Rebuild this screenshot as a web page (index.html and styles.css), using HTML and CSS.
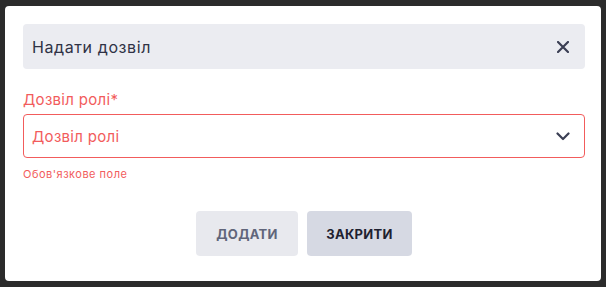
FILE: index.html
```html
<!DOCTYPE html>
<html lang="uk">
<head>
  <meta charset="UTF-8">
  <meta name="viewport" content="width=device-width, initial-scale=1.0">
  <title>Надати дозвіл</title>
  <link rel="stylesheet" href="styles.css">
</head>
<body>
  <div class="dialog">
    <div class="dialog-header">
      <span class="dialog-title">Надати дозвіл</span>
      <button class="close-btn" aria-label="Закрити">
        <svg width="12" height="12" viewBox="0 0 12 12">
          <path d="M1 1L11 11M11 1L1 11" stroke="#3b3f54" stroke-width="2.2" stroke-linecap="round"/>
        </svg>
      </button>
    </div>

    <label class="field-label" for="role">Дозвіл ролі*</label>
    <div class="select-box" id="role">
      <span class="placeholder">Дозвіл ролі</span>
      <svg class="chevron" width="14" height="9" viewBox="0 0 14 9">
        <path d="M1.5 1.5L7 7L12.5 1.5" fill="none" stroke="#3b3f54" stroke-width="2.2" stroke-linecap="round" stroke-linejoin="round"/>
      </svg>
    </div>
    <div class="field-error">Обов'язкове поле</div>

    <div class="actions">
      <button class="btn btn-add">Додати</button>
      <button class="btn btn-close">Закрити</button>
    </div>
  </div>
</body>
</html>
```

FILE: styles.css
```css
* {
  margin: 0;
  padding: 0;
  box-sizing: border-box;
  font-family: Inter, 'Noto Sans', sans-serif;
}
body {
  background: #2b2b2b;
  padding: 6px 5px;
}
.dialog {
  width: 596px;
  height: 275px;
  background: #fff;
  border-radius: 4px;
  padding: 18px 16px 0 18px;
}
.dialog-header {
  display: flex;
  align-items: center;
  justify-content: space-between;
  height: 45px;
  background: #ebecf1;
  border-radius: 4px;
  padding: 0 16px 0 9px;
}
.dialog-title {
  font-size: 16px;
  letter-spacing: 0.6px;
  color: #2f3245;
}
.close-btn {
  border: none;
  background: none;
  display: flex;
  cursor: pointer;
}
.field-label {
  display: block;
  margin-top: 21px;
  font-size: 15px;
  letter-spacing: 0.3px;
  line-height: 20px;
  color: #f25c5c;
}
.select-box {
  display: flex;
  align-items: center;
  justify-content: space-between;
  height: 44px;
  margin-top: 4px;
  border: 1px solid #f25c5c;
  border-radius: 4px;
  padding: 0 14px 0 8px;
}
.placeholder {
  font-size: 15px;
  letter-spacing: 0.3px;
  color: #f25c5c;
}
.field-error {
  margin-top: 9px;
  font-size: 11px;
  letter-spacing: 0.5px;
  line-height: 14px;
  color: #f25c5c;
}
.actions {
  display: flex;
  justify-content: center;
  gap: 9px;
  margin-top: 30px;
}
.btn {
  height: 45px;
  border: none;
  border-radius: 4px;
  font-size: 13px;
  font-weight: 700;
  letter-spacing: 0.3px;
  text-transform: uppercase;
  cursor: pointer;
}
.btn-add {
  width: 102px;
  background: #e8e9ee;
  color: #60657a;
}
.btn-close {
  width: 105px;
  background: #d6d9e3;
  color: #1e2130;
}
```
